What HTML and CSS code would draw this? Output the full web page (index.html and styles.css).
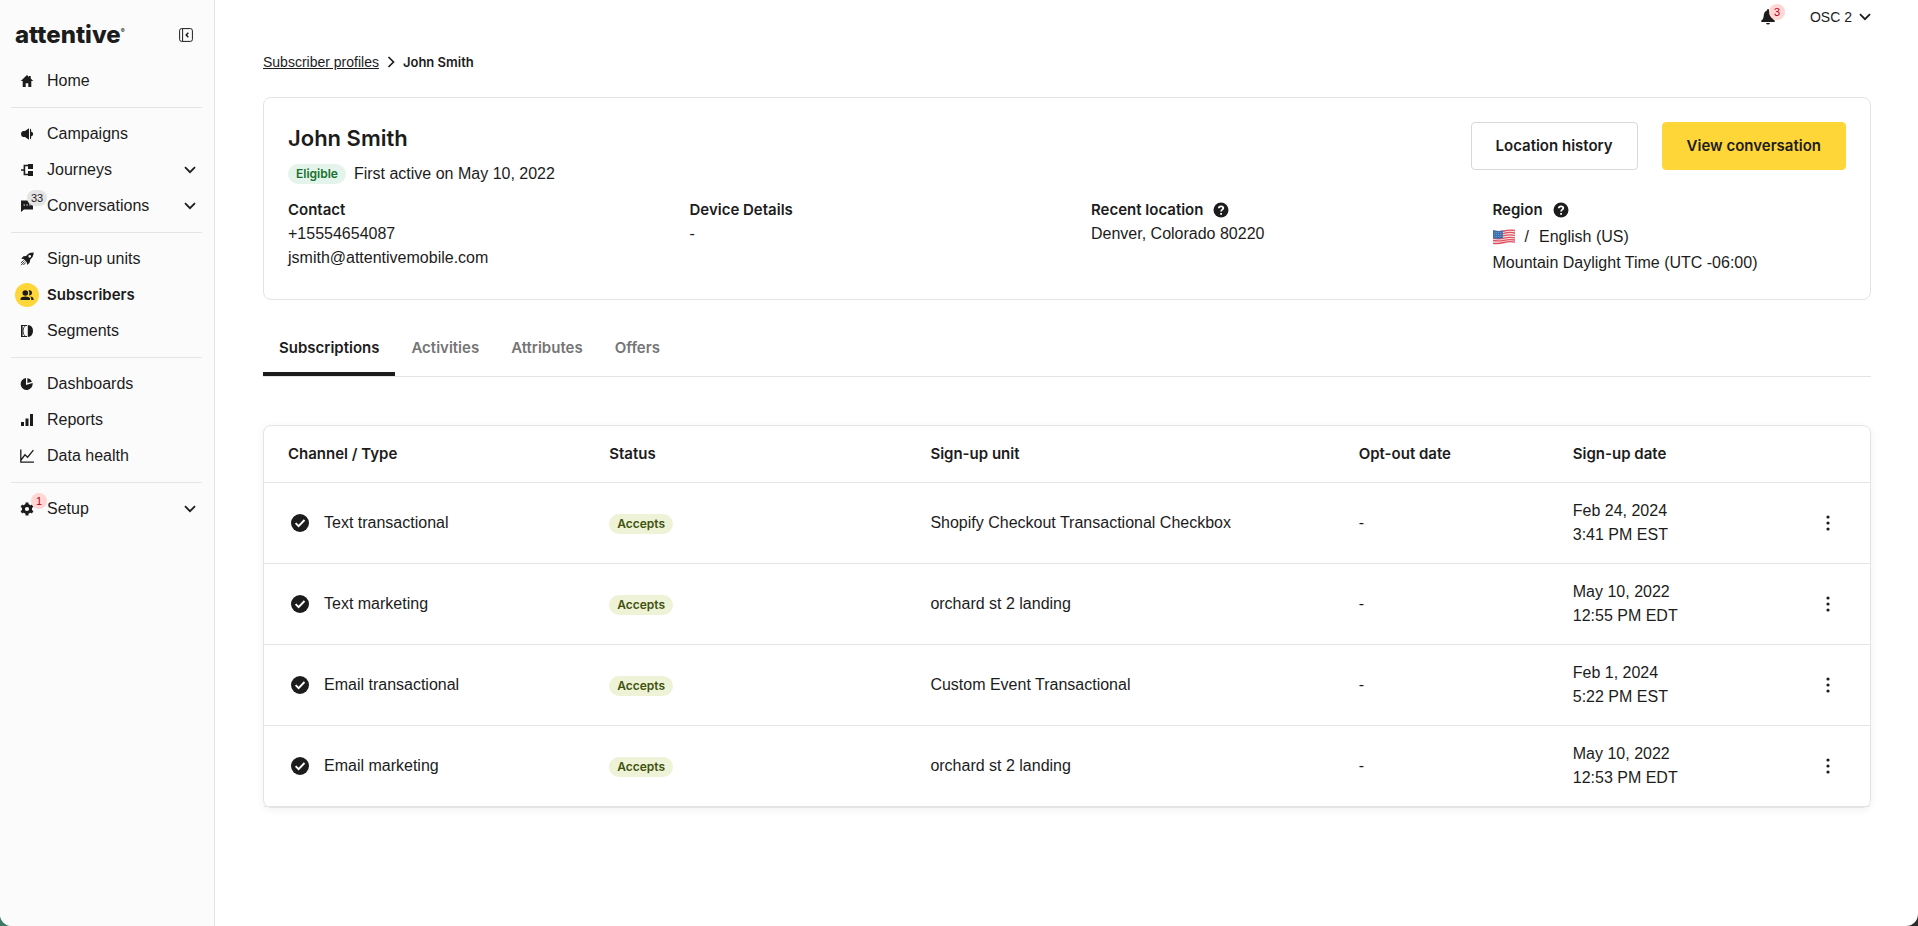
FILE: index.html
```html
<!DOCTYPE html>
<html lang="en">
<head>
    <meta charset="UTF-8">
    <meta name="viewport" content="width=device-width, initial-scale=1.0">
    <title>John Smith - Subscriber profiles</title>
    <link rel="stylesheet" href="styles.css">
</head>
<body>
    <svg class="sprite" aria-hidden="true">
        <symbol id="chevron" viewBox="0 0 12 8"><path d="M1 1.2l5 5 5-5" fill="none" stroke="currentColor" stroke-width="1.8"/></symbol>
        <symbol id="help" viewBox="0 0 16 16"><circle cx="8" cy="8" r="7.5"/><path d="M5.8 6.3C5.8 3.6 10.3 3.7 10.3 6.1 10.3 7.7 8.1 7.6 8.1 9.5M8.1 10.9v1.9" fill="none" stroke="#fff" stroke-width="1.8"/></symbol>
        <symbol id="check" viewBox="0 0 18 18"><circle cx="9" cy="9" r="9"/><path d="M4.6 9.2l3 3L13.5 6" fill="none" stroke="#fff" stroke-width="1.9"/></symbol>
        <symbol id="dots" viewBox="0 0 4 16"><circle cx="2" cy="2" r="1.6"/><circle cx="2" cy="8" r="1.6"/><circle cx="2" cy="14" r="1.6"/></symbol>
    </svg>

    <div class="app">
        <aside class="sidebar">
            <div class="brand">
                <a href="#" class="logo">attentive<sup>®</sup></a>
                <button class="icon-btn" aria-label="Collapse menu">
                    <svg class="outline" width="14" height="14" viewBox="0 0 14 14"><rect x=".6" y=".6" width="12.8" height="12.8" rx="2"/><path d="M3.6 1v12"/><path d="M9.3 4.7L7.2 7l2.1 2.3" stroke-width="1.5"/></svg>
                </button>
            </div>

            <nav>
                <ul class="nav-group">
                    <li><a href="#"><span class="nav-icon"><svg viewBox="0 0 14 14"><path d="M7 1L.8 7h1.9v6h3V9.2h2.6V13h3V7h1.9L10.7 4.6V2H9v1z"/></svg></span>Home</a></li>
                </ul>
                <ul class="nav-group">
                    <li><a href="#"><span class="nav-icon"><svg viewBox="0 0 14 14"><path d="M9 1.3v11.4L5 10H3Q1 9.6 1 7t2-3h2zM10 4.2V1.600q1.200.5 1.200 2v1.200q2 .4 2 2.200t-2 2.200v1.200q0 1.500-1.200 2z"/></svg></span>Campaigns</a></li>
                    <li><a href="#"><span class="nav-icon"><svg viewBox="0 0 14 14"><path d="M8 1h5v5H8zM8 8h5v5H8z"/><path d="M8 2.500H4.400v9H8M1 7h3.400" fill="none" stroke="currentColor" stroke-width="1.600"/></svg></span>Journeys<svg class="chevron"><use href="#chevron"/></svg></a></li>
                    <li><a href="#"><span class="nav-icon"><svg viewBox="0 0 14 14"><path d="M1 1.5h12v9H4L1 13z"/><path d="M3.6 6h1.3M6.4 6h1.3M9.2 6h1.3" stroke="#fff" stroke-width="1.1"/></svg><span class="count">33</span></span>Conversations<svg class="chevron"><use href="#chevron"/></svg></a></li>
                </ul>
                <ul class="nav-group">
                    <li><a href="#"><span class="nav-icon"><svg viewBox="0 0 14 14"><path fill-rule="evenodd" d="M13.6.5q-4.6-.3-7.4 3.4L3.4 4.3 1.2 6.8l2.4.3 3.3 3.3.3 2.5 2.5-2.3.5-2.8Q13.8 5 13.6.5zM9.7 3a1.3 1.3 0 1 1 0 2.7 1.3 1.3 0 0 1 0-2.7z"/><path d="M3.6 8.4L.9 11M4.6 9.5l-3.5 3.6M5.7 10.5L3.4 13" fill="none" stroke="currentColor" stroke-width=".9"/></svg></span>Sign-up units</a></li>
                    <li><a href="#" class="active" aria-current="page"><span class="nav-icon"><svg viewBox="0 0 14 14"><circle cx="5.3" cy="5" r="2.8"/><path d="M.6 12V10.5Q1.5 8.6 5.3 8.6t4.7 1.9V12zM8.6 2.3q3.4-.4 3.4 2.5 0 2.6-3.2 2.8Q10.3 4.9 8.6 2.3zM10 8.6q2.9.2 3.5 1.9V12h-2.3v-1.5Q11 9.3 10 8.6z"/></svg></span>Subscribers</a></li>
                    <li><a href="#"><span class="nav-icon"><svg viewBox="0 0 14 14"><path d="M1 1h6v1H2.600v10H7v1H1zM7.800 1Q13 1.400 13 7t-5.200 6z"/><path d="M5.500 1.500Q3 3.500 3 7t2.500 5.500" fill="none" stroke="currentColor" stroke-width=".8"/></svg></span>Segments</a></li>
                </ul>
                <ul class="nav-group">
                    <li><a href="#"><span class="nav-icon"><svg viewBox="0 0 14 14"><path d="M6 1v6.9l6.6-1.800A6 6 0 1 1 6 1z"/><path d="M7.400.9v5l4.600-1.200A6 6 0 0 0 7.400.9z"/></svg></span>Dashboards</a></li>
                    <li><a href="#"><span class="nav-icon"><svg viewBox="0 0 14 14"><path d="M1 9h3v4H1zM5.500 5.500h3V13h-3zM10 1h3v12h-3z"/></svg></span>Reports</a></li>
                    <li><a href="#"><span class="nav-icon"><svg viewBox="0 0 14 14"><path d="M.8.5v12.700H14M1 11l4-5.200 2.600 2.400L13.400 1.200" fill="none" stroke="currentColor" stroke-width="1.300"/></svg></span>Data health</a></li>
                </ul>
                <ul class="nav-group">
                    <li><a href="#"><span class="nav-icon"><svg viewBox="0 0 14 14"><circle cx="7" cy="7" r="3.6" fill="none" stroke="currentColor" stroke-width="3"/><path d="M7 .4v3M7 10.6v3M1.3 3.7l2.6 1.5M10.1 8.8l2.6 1.5M1.3 10.3l2.6-1.5M10.1 5.2l2.6-1.5" fill="none" stroke="currentColor" stroke-width="3"/></svg><span class="count alert">1</span></span>Setup<svg class="chevron"><use href="#chevron"/></svg></a></li>
                </ul>
            </nav>
        </aside>

        <main class="main">
            <header class="topbar">
                <button class="icon-btn bell" aria-label="Notifications">
                    <svg width="14" height="16" viewBox="0 0 14 16"><path d="M7 0Q8 0 8 1.4 11.2 2.5 11.3 7q0 3 2.4 4.5V13H.3v-1.5Q2.7 10 2.7 7 2.8 2.5 6 1.4 6 0 7 0zM5 14h4q-.4 1.6-2 1.6T5 14z"/></svg>
                    <span class="count alert">3</span>
                </button>
                <button class="account">OSC 2<svg class="chevron"><use href="#chevron"/></svg></button>
            </header>

            <nav class="breadcrumb" aria-label="Breadcrumb">
                <a href="#">Subscriber profiles</a>
                <svg width="8" height="12" viewBox="0 0 8 12"><path d="M1.5 1l5 5-5 5" fill="none" stroke="currentColor" stroke-width="1.7"/></svg>
                <strong>John Smith</strong>
            </nav>

            <section class="profile">
                <div class="profile-head">
                    <div>
                        <h1>John Smith</h1>
                        <p class="activity"><span class="pill eligible">Eligible</span>First active on May 10, 2022</p>
                    </div>
                    <div class="actions">
                        <button class="btn">Location history</button>
                        <button class="btn primary">View conversation</button>
                    </div>
                </div>
                <div class="details">
                    <div>
                        <h2>Contact</h2>
                        <p>+15554654087</p>
                        <p>jsmith@attentivemobile.com</p>
                    </div>
                    <div>
                        <h2>Device Details</h2>
                        <p>-</p>
                    </div>
                    <div>
                        <h2>Recent location <svg class="help"><use href="#help"/></svg></h2>
                        <p>Denver, Colorado 80220</p>
                    </div>
                    <div>
                        <h2>Region <svg class="help"><use href="#help"/></svg></h2>
                        <p class="language">
                            <svg class="flag" viewBox="0 0 22 16" role="img" aria-label="United States">
                                <path d="M0 1.2q5.5 1.6 11 .1T22 .8v13q-5.5-1.3-11 .2T0 15z" fill="#f4e9ea"/>
                                <path d="M0 1.9q5.5 1.6 11 .1t11-.5M0 4.3q5.5 1.5 11 0t11-.3M0 6.7q5.5 1.5 11 0t11-.3M0 9.1q5.5 1.3 11 0t11-.3M0 11.5q5.5 1 11-.2t11-.3M0 14.3q5.5.7 11-.8t11-.3" fill="none" stroke="#e2505f" stroke-width="1.3"/>
                                <path d="M0 1.2q5 1.4 10 .4v7.5q-5 1-10 .1z" fill="#3a6fae"/>
                                <path d="M1.5 3.6h8M1.5 5.5h8M1.5 7.4h8" stroke="#a9c4e2" stroke-width=".6" stroke-dasharray=".8 1"/>
                            </svg>
                            <span>/</span>
                            <span>English (US)</span>
                        </p>
                        <p>Mountain Daylight Time (UTC -06:00)</p>
                    </div>
                </div>
            </section>

            <div class="tabs" role="tablist">
                <button role="tab" aria-selected="true">Subscriptions</button>
                <button role="tab" aria-selected="false">Activities</button>
                <button role="tab" aria-selected="false">Attributes</button>
                <button role="tab" aria-selected="false">Offers</button>
            </div>

            <div class="table-card">
                <table>
                    <colgroup>
                        <col class="col-channel">
                        <col class="col-status">
                        <col class="col-unit">
                        <col class="col-date">
                        <col class="col-date">
                        <col>
                    </colgroup>
                    <thead>
                        <tr>
                            <th>Channel / Type</th>
                            <th>Status</th>
                            <th>Sign-up unit</th>
                            <th>Opt-out date</th>
                            <th>Sign-up date</th>
                            <th></th>
                        </tr>
                    </thead>
                    <tbody>
                        <tr>
                            <td><div class="channel"><svg class="check"><use href="#check"/></svg>Text transactional</div></td>
                            <td><span class="pill accepts">Accepts</span></td>
                            <td>Shopify Checkout Transactional Checkbox</td>
                            <td>-</td>
                            <td>Feb 24, 2024<br>3:41 PM EST</td>
                            <td><button class="icon-btn more" aria-label="More actions"><svg class="dots"><use href="#dots"/></svg></button></td>
                        </tr>
                        <tr>
                            <td><div class="channel"><svg class="check"><use href="#check"/></svg>Text marketing</div></td>
                            <td><span class="pill accepts">Accepts</span></td>
                            <td>orchard st 2 landing</td>
                            <td>-</td>
                            <td>May 10, 2022<br>12:55 PM EDT</td>
                            <td><button class="icon-btn more" aria-label="More actions"><svg class="dots"><use href="#dots"/></svg></button></td>
                        </tr>
                        <tr>
                            <td><div class="channel"><svg class="check"><use href="#check"/></svg>Email transactional</div></td>
                            <td><span class="pill accepts">Accepts</span></td>
                            <td>Custom Event Transactional</td>
                            <td>-</td>
                            <td>Feb 1, 2024<br>5:22 PM EST</td>
                            <td><button class="icon-btn more" aria-label="More actions"><svg class="dots"><use href="#dots"/></svg></button></td>
                        </tr>
                        <tr>
                            <td><div class="channel"><svg class="check"><use href="#check"/></svg>Email marketing</div></td>
                            <td><span class="pill accepts">Accepts</span></td>
                            <td>orchard st 2 landing</td>
                            <td>-</td>
                            <td>May 10, 2022<br>12:53 PM EDT</td>
                            <td><button class="icon-btn more" aria-label="More actions"><svg class="dots"><use href="#dots"/></svg></button></td>
                        </tr>
                    </tbody>
                </table>
            </div>
        </main>
    </div>
</body>
</html>
```

FILE: styles.css
```css
:root {
    --ink: #1c1c1c;
    --muted: #757575;
    --line: #e4e4e4;
    --yellow: #ffd638;
    --text-font: "Liberation Sans", Arial, sans-serif;
    --bold-font: Inter, "Liberation Sans", sans-serif;
}

* {
    box-sizing: border-box;
}

body {
    margin: 0;
    background: linear-gradient(90deg, #3d7a66 50%, #2b2b2b 50%);
    color: var(--ink);
    font-family: var(--text-font);
    font-size: 16px;
    line-height: 24px;
}

h1, h2, p, ul {
    margin: 0;
    padding: 0;
}

a {
    color: inherit;
}

button {
    border: none;
    background: none;
    padding: 0;
    color: inherit;
    font: inherit;
    cursor: pointer;
}

svg {
    display: block;
    flex: none;
    fill: currentColor;
}

.outline {
    fill: none;
    stroke: currentColor;
}

.sprite {
    display: none;
}

.app {
    display: flex;
    min-height: 100vh;
    background: #fff;
    border-radius: 0 0 12px 12px;
    overflow: hidden;
}

/* Sidebar */
.sidebar {
    flex: none;
    width: 215px;
    padding: 7px 12px 0 11px;
    background: #fbfbfb;
    border-right: 1px solid var(--line);
}

.brand {
    display: flex;
    align-items: center;
    justify-content: space-between;
    height: 56px;
    padding: 0 9px 0 4px;
}

.logo {
    font-family: var(--bold-font);
    font-size: 24px;
    font-weight: 800;
    text-decoration: none;
}

.logo sup {
    font-size: 6px;
    line-height: 0;
    vertical-align: 10px;
}

.icon-btn {
    display: flex;
    align-items: center;
    justify-content: center;
}

.nav-group {
    list-style: none;
}

.nav-group + .nav-group {
    margin-top: 8px;
    padding-top: 8px;
    border-top: 1px solid var(--line);
}

.nav-group a {
    display: flex;
    align-items: center;
    gap: 8px;
    height: 36px;
    padding: 0 6px 0 4px;
    text-decoration: none;
}

.nav-group a.active {
    font-family: var(--bold-font);
    font-size: 15px;
    font-weight: 600;
}

.nav-icon {
    position: relative;
    display: flex;
    align-items: center;
    justify-content: center;
    width: 24px;
    height: 24px;
    border-radius: 50%;
}

.active .nav-icon {
    background: var(--yellow);
}

.nav-icon svg {
    width: 14px;
    height: 14px;
}

.chevron {
    width: 12px;
    height: 8px;
}

.nav-group .chevron {
    margin-left: auto;
}

.count {
    position: absolute;
    top: -4px;
    left: 12px;
    min-width: 16px;
    height: 16px;
    padding: 0 4px;
    border-radius: 8px;
    background: #e4e4e4;
    font-size: 11px;
    line-height: 16px;
    text-align: center;
}

.count.alert {
    left: 16px;
    background: #ffd6d4;
    color: #b3001b;
}

/* Page */
.main {
    flex: 1;
    min-width: 0;
    padding: 0 47px 0 48px;
}

.topbar {
    display: flex;
    align-items: center;
    justify-content: flex-end;
    gap: 35px;
    height: 34px;
}

.bell {
    position: relative;
    width: 14px;
    height: 24px;
}

.bell .count.alert {
    top: -1px;
    left: 8px;
}

.account {
    display: flex;
    align-items: center;
    gap: 7px;
    font-size: 14px;
}

.breadcrumb {
    display: flex;
    align-items: center;
    gap: 8px;
    margin: 16px 0 23px;
    font-size: 14px;
}

.breadcrumb strong {
    font-family: var(--bold-font);
    font-size: 13px;
    font-weight: 600;
}

.profile {
    padding: 24px;
    border: 1px solid var(--line);
    border-radius: 8px;
}

.profile-head {
    display: flex;
    justify-content: space-between;
    margin-bottom: 12px;
}

h1 {
    margin-bottom: 8px;
    font-family: var(--bold-font);
    font-size: 22px;
    font-weight: 600;
    line-height: 32px;
}

.activity {
    display: flex;
    align-items: center;
    gap: 8px;
}

.pill {
    display: inline-block;
    padding: 0 8px;
    border-radius: 10px;
    font-family: var(--bold-font);
    font-size: 12px;
    font-weight: 600;
    line-height: 20px;
    vertical-align: middle;
}

.eligible {
    background: #e5f4ea;
    color: #15722f;
}

.accepts {
    background: #eef3d7;
    color: #3f5210;
}

.actions {
    display: flex;
    align-items: flex-start;
    gap: 24px;
}

.btn {
    height: 48px;
    padding: 0 24px;
    border: 1px solid #d8d8d8;
    border-radius: 4px;
    font-family: var(--bold-font);
    font-size: 15px;
    font-weight: 600;
}

.btn.primary {
    background: var(--yellow);
    border-color: var(--yellow);
}

.details {
    display: grid;
    grid-template-columns: repeat(4, 1fr);
    column-gap: 48px;
}

h2 {
    display: flex;
    align-items: center;
    gap: 10px;
    font-family: var(--bold-font);
    font-size: 15px;
    font-weight: 600;
}

.help {
    width: 16px;
    height: 16px;
}

.language {
    display: flex;
    align-items: center;
    gap: 10px;
    height: 29px;
}

.flag {
    width: 22px;
    height: 16px;
}

.tabs {
    display: flex;
    margin: 24px 0 48px;
    border-bottom: 1px solid var(--line);
}

.tabs button {
    height: 52px;
    padding: 0 16px;
    border-bottom: 4px solid transparent;
    color: var(--muted);
    font-family: var(--bold-font);
    font-size: 15px;
    font-weight: 600;
}

.tabs button[aria-selected="true"] {
    border-bottom-color: var(--ink);
    color: var(--ink);
}

.table-card {
    margin-bottom: 48px;
    border: 1px solid var(--line);
    border-radius: 8px;
    box-shadow: 0 2px 8px rgba(0, 0, 0, 0.06);
}

table {
    width: 100%;
    border-collapse: separate;
    border-spacing: 0;
    table-layout: fixed;
}

.col-channel, .col-status {
    width: 20%;
}

.col-unit {
    width: 26.67%;
}

.col-date {
    width: 13.33%;
}

th, td {
    padding: 16px 24px;
    border-bottom: 1px solid var(--line);
    text-align: left;
}

th {
    font-family: var(--bold-font);
    font-size: 15px;
    font-weight: 600;
}

td:nth-child(3) {
    padding-right: 0;
}

.channel {
    display: flex;
    align-items: center;
    gap: 15px;
    padding-left: 3px;
}

.check {
    width: 18px;
    height: 18px;
}

.more {
    width: 36px;
    height: 36px;
    margin-left: auto;
}

.dots {
    width: 4px;
    height: 16px;
}
```
